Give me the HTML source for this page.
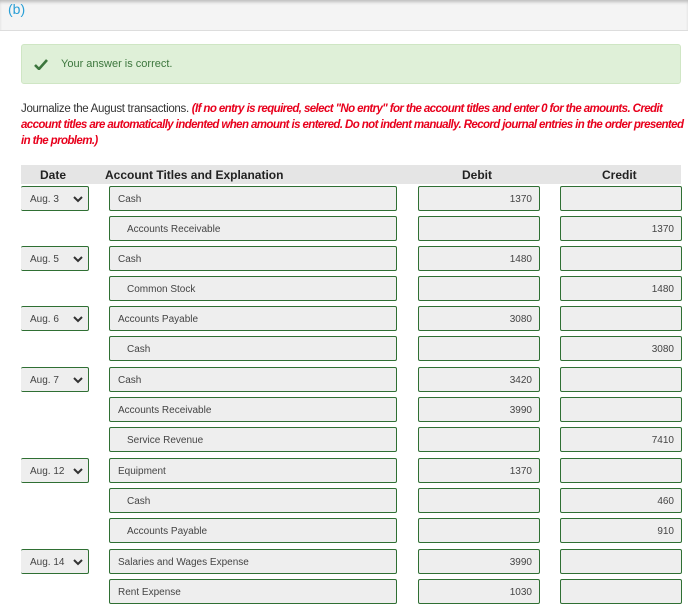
<!DOCTYPE html>
<html><head><meta charset="utf-8"><style>
*{margin:0;padding:0;box-sizing:border-box}
body{width:688px;height:603px;overflow:hidden;background:#fff;font-family:"Liberation Sans",sans-serif;position:relative;color:#333}
.top{position:absolute;left:0;top:0;width:688px;height:31px;background:#f4f4f4;border-bottom:1px solid #ddd;box-shadow:inset 0 3px 3px -1px #bbb}
.b{position:absolute;left:8px;top:1px;font-size:14px;color:#2a9fd6}
.ok{position:absolute;left:21px;top:44px;width:660px;height:40px;background:#dff0d8;border:1px solid #cfe6c4;border-radius:3px}
.ok span{position:absolute;left:39px;top:13px;font-size:11px;color:#3c763d}
.ok svg{position:absolute;left:12px;top:14px}
.p{position:absolute;left:21px;top:101px;font-size:11.5px;line-height:16px;color:#333;white-space:nowrap;letter-spacing:-0.3px}
.p i{color:#e8001c;font-weight:bold;letter-spacing:-0.6px}
.hd{position:absolute;left:21px;top:165px;width:660px;height:19px;background:#e5e5e5;font-weight:bold;font-size:12px;color:#222}
.hd span{position:absolute;top:3px}
.in{position:absolute;height:25px;background:#eeeeee;border:1px solid #2f6f33;border-radius:2px;font-size:10px;color:#444;line-height:25px}
.a{left:109px;width:288px;padding-left:8px}
.a.ind{padding-left:17px}
.d{left:418px;width:122px;text-align:right;padding-right:7px}
.c{left:560px;width:122px;text-align:right;padding-right:7px}
.dt{left:21px;width:68px;padding-left:9px;border-left:none}
.dt svg{position:absolute;right:5px;top:9px}
</style></head><body>
<div class="top"></div><div class="b">(b)</div>
<div class="ok"><svg width="14" height="11" viewBox="0 0 14 11"><path d="M1 6l4 4 8-9" stroke="#3c763d" stroke-width="2.6" fill="none"/></svg><span>Your answer is correct.</span></div>
<div class="p">Journalize the August transactions. <i>(If no entry is required, select "No entry" for the account titles and enter 0 for the amounts. Credit</i><br><i>account titles are automatically indented when amount is entered. Do not indent manually. Record journal entries in the order presented</i><br><i>in the problem.)</i></div>
<div class="hd"><span style="left:19px">Date</span><span style="left:84px">Account Titles and Explanation</span><span style="left:441px">Debit</span><span style="left:581px">Credit</span></div>
<div id="rows"></div>
<script>
var R=[[186,"Aug. 3","Cash",0,"1370",""],[216,"","Accounts Receivable",1,"","1370"],[246,"Aug. 5","Cash",0,"1480",""],[276,"","Common Stock",1,"","1480"],[306,"Aug. 6","Accounts Payable",0,"3080",""],[336,"","Cash",1,"","3080"],[367,"Aug. 7","Cash",0,"3420",""],[397,"","Accounts Receivable",0,"3990",""],[427,"","Service Revenue",1,"","7410"],[458,"Aug. 12","Equipment",0,"1370",""],[488,"","Cash",1,"","460"],[518,"","Accounts Payable",1,"","910"],[549,"Aug. 14","Salaries and Wages Expense",0,"3990",""],[579,"","Rent Expense",0,"1030",""]];
var h="";R.forEach(function(r){var t=r[0];
if(r[1])h+='<div class="in dt" style="top:'+t+'px">'+r[1]+'<svg width="10" height="7" viewBox="0 0 10 7"><path d="M1 1l4 4 4-4" stroke="#333" stroke-width="2" fill="none"/></svg></div>';
h+='<div class="in a'+(r[3]?' ind':'')+'" style="top:'+t+'px">'+r[2]+'</div>';
h+='<div class="in d" style="top:'+t+'px">'+r[4]+'</div>';
h+='<div class="in c" style="top:'+t+'px">'+r[5]+'</div>';});
document.getElementById("rows").innerHTML=h;
</script>
</body></html>
